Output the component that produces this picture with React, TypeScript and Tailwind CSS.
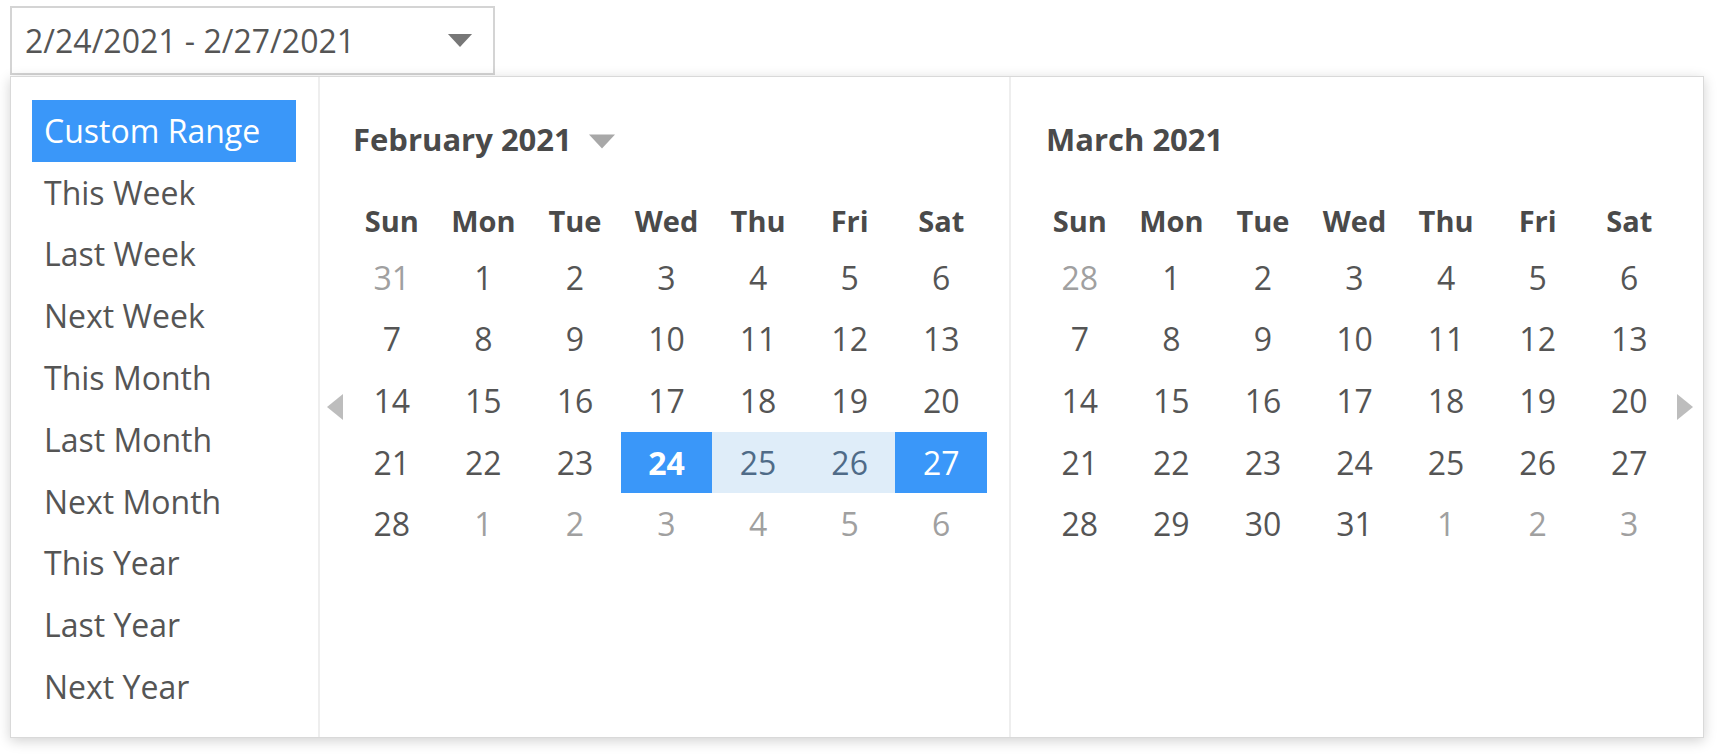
import React from "react";

type Day = { n: number; out?: boolean };

const ranges = [
  "Custom Range",
  "This Week",
  "Last Week",
  "Next Week",
  "This Month",
  "Last Month",
  "Next Month",
  "This Year",
  "Last Year",
  "Next Year",
];

const weekDays = ["Sun", "Mon", "Tue", "Wed", "Thu", "Fri", "Sat"];

// builds the weeks of a month, starting on sunday
function buildMonth(prevLast: number, startDay: number, length: number, rows: number): Day[] {
  const days: Day[] = [];
  for (let i = startDay - 1; i >= 0; i--) days.push({ n: prevLast - i, out: true });
  for (let d = 1; d <= length; d++) days.push({ n: d });
  let next = 1;
  while (days.length < rows * 7) days.push({ n: next++, out: true });
  return days;
}

const february = buildMonth(31, 1, 28, 5);
const march = buildMonth(28, 1, 31, 5);

const Caret = ({ className }: { className: string }) => (
  <svg viewBox="0 0 26 14" className={className}>
    <path d="M0 0 L26 0 L13 14 Z" fill="currentColor" />
  </svg>
);

const MonthGrid = ({ days, selected }: { days: Day[]; selected: boolean }) => (
  <div className="grid w-[641px] grid-cols-7">
    {weekDays.map((w) => (
      <div key={w} className="flex h-[52px] items-center justify-center text-[29px] font-bold text-[#4a4a4a]">
        {w}
      </div>
    ))}
    {days.map((d, i) => {
      const isStart = selected && !d.out && d.n === 24;
      const isEnd = selected && !d.out && d.n === 27;
      const inRange = selected && !d.out && (d.n === 25 || d.n === 26);
      let cls = "text-[#555555]";
      if (d.out) cls = "text-[#a0a0a0]";
      if (isStart) cls = "bg-[#3a97f9] font-bold text-white";
      if (isEnd) cls = "bg-[#3a97f9] text-white";
      if (inRange) cls = "bg-[#dfedf9] text-[#4f6b88]";
      return (
        <div key={i} className={`flex h-[61.6px] items-center justify-center text-[32px] ${cls}`}>
          {d.n}
        </div>
      );
    })}
  </div>
);

export default function App() {
  return (
    <div className="min-h-screen bg-white pl-[10px] pt-[6px] font-['Open_Sans',sans-serif]">
      <div className="relative w-[485px]">
        <div className="flex h-[69px] items-center justify-between border-2 border-[#d4d4d4] bg-white pl-[13px] pr-[20px] text-[32px] text-[#555555]">
          <span>2/24/2021 - 2/27/2021</span>
          <Caret className="h-[13px] w-[26px] text-[#777777]" />
        </div>

        <div className="absolute left-0 top-[70px] z-10 flex h-[662px] w-[1694px] border border-[#d9d9d9] bg-white shadow-[0_3px_12px_rgba(0,0,0,0.18)]">
          {/* preset ranges */}
          <div className="w-[309px] shrink-0 border-r-2 border-[#eeeeee] pl-[21px] pt-[23px]">
            {ranges.map((r, i) => (
              <div
                key={r}
                className={`flex h-[61.8px] w-[264px] items-center pl-[12px] text-[32px] ${
                  i === 0 ? "bg-[#3a97f9] text-white" : "text-[#555555]"
                }`}
              >
                {r}
              </div>
            ))}
          </div>

          {/* february */}
          <div className="flex w-[691px] shrink-0 border-r-2 border-[#eeeeee] pl-[7px]">
            <div className="flex w-[16px] items-center">
              <svg viewBox="0 0 16 26" className="h-[26px] w-[16px] text-[#bdbdbd]">
                <path d="M16 0 L16 26 L0 13 Z" fill="currentColor" />
              </svg>
            </div>
            <div className="ml-[3px]">
              <div className="flex h-[118px] items-center pl-[7px] pt-[6px]">
                <span className="text-[31px] font-bold text-[#4a4a4a]">February 2021</span>
                <Caret className="ml-[17px] mt-[4px] h-[15px] w-[26px] text-[#a8a8a8]" />
              </div>
              <MonthGrid days={february} selected />
            </div>
          </div>

          {/* march */}
          <div className="flex flex-1 pl-[23px]">
            <div>
              <div className="flex h-[118px] items-center pl-[12px] pt-[6px]">
                <span className="text-[31px] font-bold text-[#4a4a4a]">March 2021</span>
              </div>
              <MonthGrid days={march} selected={false} />
            </div>
            <div className="ml-[2px] flex w-[16px] items-center">
              <svg viewBox="0 0 16 26" className="h-[26px] w-[16px] text-[#bdbdbd]">
                <path d="M0 0 L16 13 L0 26 Z" fill="currentColor" />
              </svg>
            </div>
          </div>
        </div>
      </div>
    </div>
  );
}
